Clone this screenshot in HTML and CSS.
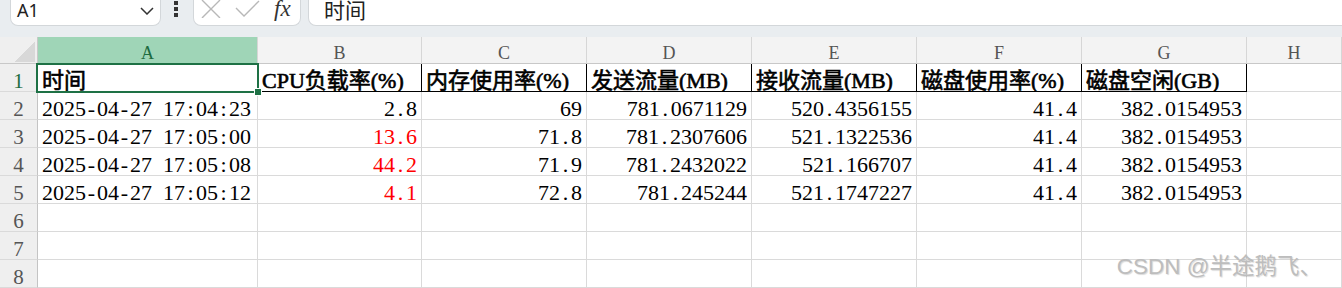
FILE: index.html
```html
<!DOCTYPE html>
<html lang="zh-CN">
<head>
    <meta charset="UTF-8">
    <meta name="viewport" content="width=device-width, initial-scale=1.0">
    <title>监控数据.xlsx</title>
    <link rel="stylesheet" href="styles.css">
</head>
<body>
    <div class="toolbar">
        <div class="box namebox">
            <span>A1</span>
            <svg class="chevron" width="14" height="8" viewBox="0 0 14 8"><path d="M1 1 L7 7 L13 1" fill="none" stroke="#333" stroke-width="1.5"/></svg>
        </div>
        <div class="grip"><i></i><i></i><i></i></div>
        <div class="box fxbox">
            <svg class="cancel" width="20" height="18" viewBox="0 0 20 18"><path d="M1 0 L19 18 M19 0 L1 18" stroke="#b8b8b8" stroke-width="1.4"/></svg>
            <svg class="enter" width="25" height="17" viewBox="0 0 25 17"><path d="M1 8 L9 16 L24 1" fill="none" stroke="#b8b8b8" stroke-width="1.4"/></svg>
            <span class="fx">fx</span>
        </div>
        <div class="box formula">时间</div>
    </div>
    <div class="band"></div>

    <div class="sheet">
        <!-- column headers -->
        <div class="c corner"></div>
        <div class="c hd active">A</div>
        <div class="c hd">B</div>
        <div class="c hd">C</div>
        <div class="c hd">D</div>
        <div class="c hd">E</div>
        <div class="c hd">F</div>
        <div class="c hd">G</div>
        <div class="c hd">H</div>

        <!-- row 1 -->
        <div class="c rh active">1</div>
        <div class="c title">时间</div>
        <div class="c title boxed">CPU负载率(%)</div>
        <div class="c title boxed">内存使用率(%)</div>
        <div class="c title boxed">发送流量(MB)</div>
        <div class="c title boxed">接收流量(MB)</div>
        <div class="c title boxed">磁盘使用率(%)</div>
        <div class="c title boxed">磁盘空闲(GB)</div>
        <div class="c"></div>

        <!-- row 2 -->
        <div class="c rh">2</div>
        <div class="c">2025<span class="w">-</span>04<span class="w">-</span>27<span class="w"> </span>17<span class="w">:</span>04<span class="w">:</span>23</div>
        <div class="c n">2<span class="w">.</span>8</div>
        <div class="c n">69</div>
        <div class="c n">781<span class="w">.</span>0671129</div>
        <div class="c n">520<span class="w">.</span>4356155</div>
        <div class="c n">41<span class="w">.</span>4</div>
        <div class="c n">382<span class="w">.</span>0154953</div>
        <div class="c"></div>

        <!-- row 3 -->
        <div class="c rh">3</div>
        <div class="c">2025<span class="w">-</span>04<span class="w">-</span>27<span class="w"> </span>17<span class="w">:</span>05<span class="w">:</span>00</div>
        <div class="c n red">13<span class="w">.</span>6</div>
        <div class="c n">71<span class="w">.</span>8</div>
        <div class="c n">781<span class="w">.</span>2307606</div>
        <div class="c n">521<span class="w">.</span>1322536</div>
        <div class="c n">41<span class="w">.</span>4</div>
        <div class="c n">382<span class="w">.</span>0154953</div>
        <div class="c"></div>

        <!-- row 4 -->
        <div class="c rh">4</div>
        <div class="c">2025<span class="w">-</span>04<span class="w">-</span>27<span class="w"> </span>17<span class="w">:</span>05<span class="w">:</span>08</div>
        <div class="c n red">44<span class="w">.</span>2</div>
        <div class="c n">71<span class="w">.</span>9</div>
        <div class="c n">781<span class="w">.</span>2432022</div>
        <div class="c n">521<span class="w">.</span>166707</div>
        <div class="c n">41<span class="w">.</span>4</div>
        <div class="c n">382<span class="w">.</span>0154953</div>
        <div class="c"></div>

        <!-- row 5 -->
        <div class="c rh">5</div>
        <div class="c">2025<span class="w">-</span>04<span class="w">-</span>27<span class="w"> </span>17<span class="w">:</span>05<span class="w">:</span>12</div>
        <div class="c n red">4<span class="w">.</span>1</div>
        <div class="c n">72<span class="w">.</span>8</div>
        <div class="c n">781<span class="w">.</span>245244</div>
        <div class="c n">521<span class="w">.</span>1747227</div>
        <div class="c n">41<span class="w">.</span>4</div>
        <div class="c n">382<span class="w">.</span>0154953</div>
        <div class="c"></div>

        <!-- empty rows -->
        <div class="c rh">6</div>
        <div class="c"></div><div class="c"></div><div class="c"></div><div class="c"></div>
        <div class="c"></div><div class="c"></div><div class="c"></div><div class="c"></div>

        <div class="c rh">7</div>
        <div class="c"></div><div class="c"></div><div class="c"></div><div class="c"></div>
        <div class="c"></div><div class="c"></div><div class="c"></div><div class="c"></div>

        <div class="c rh">8</div>
        <div class="c"></div><div class="c"></div><div class="c"></div><div class="c"></div>
        <div class="c"></div><div class="c"></div><div class="c"></div><div class="c"></div>

        <!-- selected cell A1 -->
        <div class="selection"><span class="handle"></span></div>
    </div>

    <div class="watermark">CSDN @半途鹅飞、</div>
</body>
</html>
```

FILE: styles.css
```css
body {
    margin: 0;
    background: #fff;
    font-family: "Liberation Serif", "Noto Sans CJK SC", serif;
    color: #000;
    overflow: hidden;
}

/* formula bar - the boxes run past the top edge, so only their lower half shows */
.toolbar {
    height: 26px;
    display: flex;
    align-items: flex-start;
    background: #e9edf0;
}

.box {
    height: 26px;
    box-sizing: border-box;
    background: #fff;
    border: 1px solid #d3d7da;
    border-top: none;
    border-radius: 0 0 8px 8px;
    display: flex;
    align-items: flex-start;
}

.namebox {
    margin-left: 10px;
    width: 151px;
    padding: 1px 6px 0 6px;
    justify-content: space-between;
    font-family: "Noto Sans", sans-serif;
    font-size: 18px;
    line-height: 18px;
    color: #222;
}

.chevron {
    margin-top: 6px;
}

.grip {
    margin: 1px 0 0 13px;
    display: flex;
    flex-direction: column;
    gap: 2px;
}

.grip i {
    width: 4px;
    height: 4px;
    background: #333;
}

.fxbox {
    margin-left: 15px;
    width: 108px;
    padding-left: 7px;
    gap: 14px;
}

.fx {
    font-style: italic;
    font-size: 23px;
    line-height: 18px;
    color: #333;
}

.formula {
    flex: 1;
    margin-left: 7px;
    margin-right: -12px;
    padding: 1px 0 0 15px;
    font-family: "Noto Sans CJK SC", sans-serif;
    font-size: 21px;
    line-height: 16px;
    color: #222;
}

.band {
    height: 11px;
    background: #e9edf0;
}

/* grid */
.sheet {
    position: relative;
    display: grid;
    grid-template-columns: 38px 220px 164px repeat(5, 165px) 1fr;
    grid-template-rows: 27px repeat(8, 28px);
}

.c {
    box-sizing: border-box;
    border-right: 1px solid #dadada;
    border-bottom: 1px solid #dadada;
    padding: 7px 4px 0 4px;
    font-size: 22px;
    line-height: 20px;
    white-space: nowrap;
    overflow: hidden;
}

.n {
    text-align: right;
}

.red {
    color: #ff0000;
}

.w {
    display: inline-block;
    width: 11px;
    text-align: center;
}

.hd {
    padding-top: 6px;
    background: #f3f3f3;
    border-color: #d6d6d6;
    border-bottom-color: #c8c8c8;
    text-align: center;
    font-size: 18px;
    color: #555;
}

.hd.active {
    background: #9fd5b7;
    color: #1d6b40;
}

.corner {
    background: #efefef linear-gradient(to bottom right, transparent 50%, #d8d8d8 50%) no-repeat right 2px bottom 1px / 20px 20px;
    border-color: #c8c8c8;
}

.rh {
    padding: 7px 0 0 0;
    background: #efefef;
    border-color: #dadada;
    border-right-color: #c4c4c4;
    text-align: center;
    font-size: 21px;
    color: #555;
}

.rh.active {
    color: #1d6b40;
}

/* fake bold, like the spreadsheet does for song-style fonts */
.title {
    -webkit-text-stroke: 0.6px #000;
}

.boxed {
    border-right-color: #000;
    border-bottom-color: #000;
}

.selection {
    position: absolute;
    left: 36px;
    top: 26px;
    width: 223px;
    height: 30px;
    box-sizing: border-box;
    border: 2px solid #1e7145;
}

.handle {
    position: absolute;
    right: -5px;
    bottom: -5px;
    width: 6px;
    height: 6px;
    background: #1e7145;
    border: 1px solid #fff;
}

.watermark {
    position: absolute;
    right: 20px;
    top: 254px;
    font-family: "Liberation Sans", "Noto Sans CJK SC", sans-serif;
    font-size: 22.5px;
    line-height: 26px;
    color: #bdbdbd;
    text-shadow: 1px 1px 1px rgba(0, 0, 0, 0.15);
}
```
